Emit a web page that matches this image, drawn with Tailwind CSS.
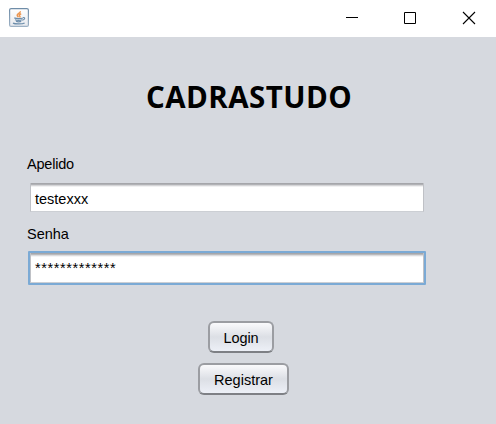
<!DOCTYPE html>
<html lang="pt">
<head>
<meta charset="utf-8">
<title>Login</title>
<script src="https://cdn.jsdelivr.net/npm/@tailwindcss/browser@4"></script>
</head>
<body class="flex h-[424px] w-[496px] flex-col overflow-hidden bg-[#d6d9df] font-['Liberation_Sans',Arial,sans-serif] text-[14.5px] leading-[18px] text-black">
<header class="flex h-[37px] shrink-0 items-start justify-between bg-white">
  <svg class="mt-2 ml-[9px] h-[19px] w-5" viewBox="0 0 20 19" fill="none">
    <defs><linearGradient id="tile" x2="0" y2="1"><stop stop-color="#fff"/><stop offset="1" stop-color="#e6e9ee"/></linearGradient><linearGradient id="rim" x2="0" y2="1"><stop stop-color="#6f8da8"/><stop offset="1" stop-color="#9eb2c5"/></linearGradient></defs>
    <rect x=".6" y=".6" width="18.8" height="17.8" rx="1.5" fill="url(#tile)" stroke="url(#rim)" stroke-width="1.2"/>
    <path d="M11.3 3.2C11.8 5 8 5.5 8.2 7.3c0 .8 1 1.3 1.2 2M12.2 5.7c-2 .8-2.4 1.5-1.5 2.3.5.5.3 1-.2 1.4" stroke="#ec9651" stroke-width="1.5"/>
    <path d="M5.3 9.9c1.8.9 6.5.9 8.6.1M6 11.7c2 .8 5 .8 7 .1M7 13.3c1.5.6 3.7.6 5.2.1M14 9.5c2.5-.2 2 2.2-.8 2.7M4 15.1c2 1.1 9.5 1.1 11.6-.2" stroke="#6c8dab" stroke-width="1.2"/>
  </svg>
  <div class="mr-[20px] flex gap-[45px] pt-[11px]">
    <svg class="h-[14px] w-[14px]" viewBox="0 0 14 14"><path d="M2 6.5h12" stroke="#000" shape-rendering="crispEdges"/></svg>
    <svg class="h-[14px] w-[14px]" viewBox="0 0 14 14"><path d="M1.5 1.5h11v11h-11z" fill="none" stroke="#000"/></svg>
    <svg class="h-[14px] w-[14px]" viewBox="0 0 14 14"><path d="M1 1l12 12M13 1L1 13" stroke="#000" stroke-width="1.1"/></svg>
  </div>
</header>
<main class="flex flex-col">
  <h1 class="mt-[40px] ml-[146px] h-10 whitespace-nowrap font-['Open_Sans','Noto_Sans',sans-serif] text-[29.5px] leading-10 font-bold tracking-[0.45px]">CADRASTUDO</h1>
  <label class="mt-[38px] ml-[27px] h-[18px] tracking-[-0.2px]">Apelido</label>
  <div class="mt-[10px] ml-[30px] flex h-[29px] w-[394px] items-center border-x border-b border-x-[#bfc1c6] border-b-[#cccfd4] bg-[linear-gradient(#a5a6aa_0_1px,#b1b2b6_1px_2px,#d5d5d7_2px_3px,#f1f1f2_3px_4px,#fff_4px)] pt-1 pl-1">testexxx</div>
  <label class="mt-[13px] ml-[27px] h-[18px]">Senha</label>
  <div class="mt-[8px] ml-[28px] h-[34px] w-[398px] rounded-[1px] border-2 border-[#7baad5] bg-white">
    <div class="flex h-[30px] items-center border-x border-b border-x-[#bfc1c6] border-b-[#cccfd4] bg-[linear-gradient(#a5a6aa_0_1px,#b9babd_1px_2px,#dcdcde_2px_3px,#f4f4f5_3px_4px,#fff_4px)] pt-px pl-1 tracking-[0.6px]">*************</div>
  </div>
  <div class="mt-[36px] ml-[198px] flex w-[91px] flex-col gap-[10px]">
    <button class="ml-[10px] h-8 w-[66px] rounded-[6px] border-2 border-[#9b9da2] border-b-[#7e8085] bg-linear-to-b from-[#fafafc] via-[#dcdfe5] to-[#edf0f7] pt-0.5 tracking-[-0.1px]">Login</button>
    <button class="h-8 w-[91px] rounded-[6px] border-2 border-[#9b9da2] border-b-[#7e8085] bg-linear-to-b from-[#fafafc] via-[#dcdfe5] to-[#edf0f7] pt-0.5">Registrar</button>
  </div>
</main>
</body>
</html>
